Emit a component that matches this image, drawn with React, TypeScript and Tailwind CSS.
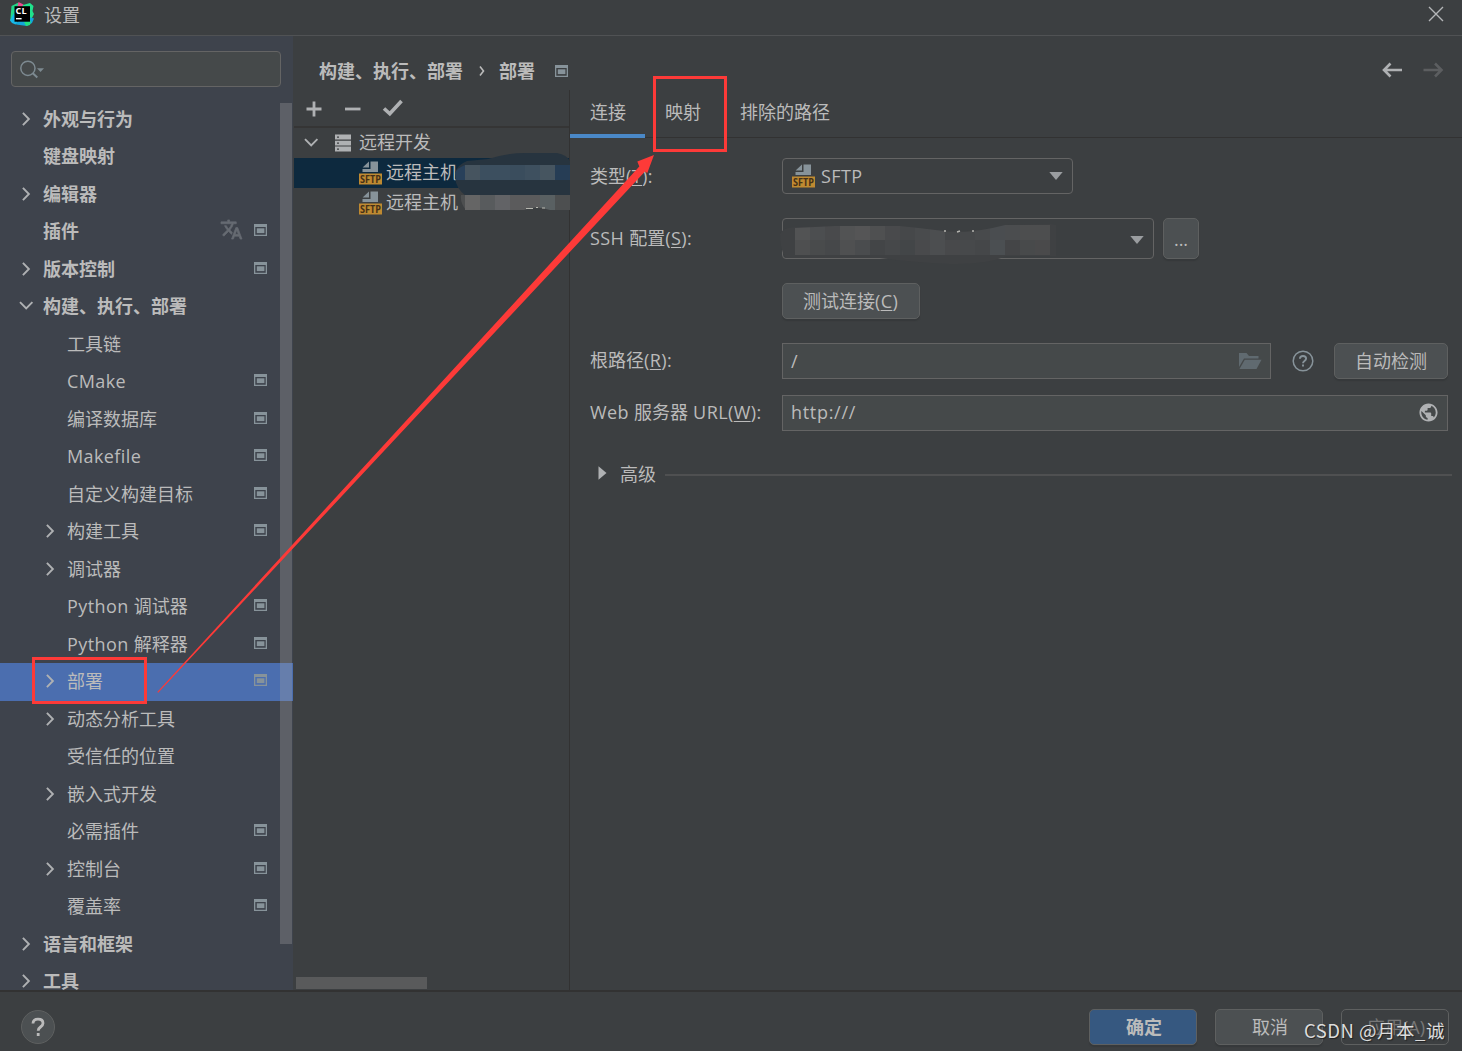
import React from 'react';
import clsx from 'clsx';

type TreeItem = {
  label: string;
  level?: number;
  arrow?: 'right' | 'down';
  badge?: boolean;
  translate?: boolean;
  selected?: boolean;
};

const TREE: TreeItem[] = [
  { label: '外观与行为', arrow: 'right' },
  { label: '键盘映射' },
  { label: '编辑器', arrow: 'right' },
  { label: '插件', badge: true, translate: true },
  { label: '版本控制', arrow: 'right', badge: true },
  { label: '构建、执行、部署', arrow: 'down' },
  { label: '工具链', level: 1 },
  { label: 'CMake', level: 1, badge: true },
  { label: '编译数据库', level: 1, badge: true },
  { label: 'Makefile', level: 1, badge: true },
  { label: '自定义构建目标', level: 1, badge: true },
  { label: '构建工具', level: 1, arrow: 'right', badge: true },
  { label: '调试器', level: 1, arrow: 'right' },
  { label: 'Python 调试器', level: 1, badge: true },
  { label: 'Python 解释器', level: 1, badge: true },
  { label: '部署', level: 1, arrow: 'right', badge: true, selected: true },
  { label: '动态分析工具', level: 1, arrow: 'right' },
  { label: '受信任的位置', level: 1 },
  { label: '嵌入式开发', level: 1, arrow: 'right' },
  { label: '必需插件', level: 1, badge: true },
  { label: '控制台', level: 1, arrow: 'right', badge: true },
  { label: '覆盖率', level: 1, badge: true },
  { label: '语言和框架', arrow: 'right' },
  { label: '工具', arrow: 'right' },
];

// latin runs sit a little wider than the CJK ones
function Mixed({ text }: { text: string }) {
  return (
    <>
      {text.split(/([\x20-\x7e]+)/).map((part, i) =>
        i % 2 ? (
          <span key={i} className="tracking-[0.4px]">
            {part}
          </span>
        ) : (
          part
        )
      )}
    </>
  );
}

function Chevron({ dir }: { dir: 'right' | 'down' }) {
  return (
    <svg width="16" height="16" viewBox="0 0 16 16" fill="none" stroke="#afb1b3" strokeWidth="1.9" className="shrink-0">
      <path d={dir === 'right' ? 'M4.9 1.8L10.9 8L4.9 14.2' : 'M2 4.2L8.2 10.4L14.4 4.2'} />
    </svg>
  );
}

function ProjectBadge({ className }: { className?: string }) {
  return (
    <svg width="14" height="12" viewBox="0 0 14 12" className={clsx('shrink-0', className)}>
      <path fillRule="evenodd" fill="#87939a" d="M0 0h13v12H0zM1.3 3v7.7h10.4V3z" />
      <rect x="2.8" y="4.3" width="7.6" height="4.8" fill="#87939a" />
    </svg>
  );
}

function SftpIcon() {
  return (
    <svg width="24" height="24" viewBox="0 0 24 24" className="shrink-0">
      <path d="M10 0.5V6.5H3.6z" fill="#87939a" />
      <path d="M11.5 0.5H19V11H3.5V8H11.5z" fill="#87939a" />
      <rect x="0" y="12.5" width="23" height="11" fill="#bf8a31" />
      <text
        x="11.5"
        y="21.9"
        textAnchor="middle"
        textLength="21"
        lengthAdjust="spacingAndGlyphs"
        fontSize="10.6"
        fontFamily="Open Sans"
        fontWeight="700"
        fill="#453017"
      >
        SFTP
      </text>
    </svg>
  );
}

function AppLogo() {
  return (
    <svg width="24" height="24" viewBox="0 0 24 24">
      <path d="M1.5 4L8 0.8L10 5L5 20L0.3 18z" fill="#21d789" />
      <path d="M8.5 0L13.5 2.5V6H7z" fill="#ee4a91" />
      <path d="M13 3L20 1L23.5 4L22.5 9L24 12L20 20L12 5z" fill="#1fe28c" />
      <path d="M0 18.5L4 11L8 21L5.5 22.5L2 21z" fill="#16b9e8" />
      <path d="M19 15L24 16.5L22 21L17 24L6 22.5L9 18z" fill="#12a5d9" />
      <path d="M14 20L21 19L20 23L16 24z" fill="#21e07f" />
      <rect x="4.5" y="4.2" width="15.5" height="15.5" fill="#000" />
      <text x="5.6" y="12.2" fontSize="8.6" fontWeight="700" fontFamily="Open Sans" fill="#fff" textLength="11" lengthAdjust="spacingAndGlyphs">
        CL
      </text>
      <rect x="6" y="16" width="5.6" height="1.4" fill="#fff" />
    </svg>
  );
}

function TreeRow({ item }: { item: TreeItem }) {
  return (
    <div
      className={clsx(
        'flex h-[37.5px] shrink-0 items-center pr-[25px]',
        item.level ? 'pl-[42px]' : 'pl-[18px] font-bold',
        item.selected && 'bg-[#4b6eaf]'
      )}
    >
      <span className="-mt-px w-[25px] shrink-0">{item.arrow && <Chevron dir={item.arrow} />}</span>
      <span className="flex-1 pb-px">
        <Mixed text={item.label} />
      </span>
      {item.translate && (
        <svg width="23" height="23" viewBox="0 0 24 24" fill="#666b72" stroke="#666b72" strokeWidth="0.7" className="mr-[11px] -mt-1">
          <path d="M12.87 15.07l-2.54-2.51.03-.03A17.52 17.52 0 0014.07 6H17V4h-7V2H8v2H1v2h11.17C11.5 7.92 10.44 9.75 9 11.35 8.07 10.32 7.3 9.19 6.69 8h-2c.73 1.63 1.73 3.17 2.98 4.56l-5.09 5.02L4 19l5-5 3.11 3.11.76-2.04zM18.500 10h-2L12 22h2l1.12-3h4.75L21 22h2l-4.500-12zm-2.620 7l1.620-4.330L19.120 17h-3.240z" />
        </svg>
      )}
      {item.badge && <ProjectBadge className="-mt-[3.5px]" />}
    </div>
  );
}

function Sidebar() {
  return (
    <aside className="relative flex w-[293px] shrink-0 flex-col overflow-hidden bg-[#3e434c]">
      <div className="mx-[11px] mt-[15px] mb-[13.5px] flex h-9 w-[270px] shrink-0 items-center rounded-[4px] border border-[#646464] bg-[#45494a] pl-2">
        <svg width="26" height="22" viewBox="0 0 26 22" fill="none" className="mt-0.5">
          <circle cx="7.9" cy="9.3" r="7.1" stroke="#7d8a91" strokeWidth="1.5" />
          <path d="M12.800 14.200L17.300 18.500" stroke="#7d8a91" strokeWidth="2" />
          <path d="M17 9.200H24L20.500 13z" fill="#7d8a91" />
        </svg>
      </div>
      {TREE.map((item) => (
        <TreeRow key={item.label} item={item} />
      ))}
      <div className="absolute top-[67px] right-px h-[841px] w-[12px] bg-[#a6a6a6]/30" />
    </aside>
  );
}

function Breadcrumb() {
  return (
    <div className="flex h-[54px] shrink-0 items-center pt-3.5 pr-[18px] pl-[25px] font-bold">
      <span className="pt-px">构建、执行、部署</span>
      <svg width="8" height="12" viewBox="0 0 8 12" fill="none" stroke="#bbb" strokeWidth="1.6" className="mt-px mr-[13px] ml-[15px]">
        <path d="M2 1.500L5.500 6L2 10.500" />
      </svg>
      <span className="pt-px">部署</span>
      <ProjectBadge className="mt-0.5 ml-5" />
      <svg width="21" height="16" viewBox="0 0 21 16" fill="none" stroke="#afb1b3" strokeWidth="2.600" className="ml-auto">
        <path d="M20 8H2M8.500 1.500L2 8L8.500 14.500" />
      </svg>
      <svg width="21" height="16" viewBox="0 0 21 16" fill="none" stroke="#5c5e60" strokeWidth="2.600" className="ml-5">
        <path d="M0.500 8H18.500M12 1.500L18.500 8L12 14.500" />
      </svg>
    </div>
  );
}

function ServerList() {
  return (
    <section className="relative flex w-[276px] shrink-0 flex-col border-r border-[#323232]">
      <div className="flex h-[38px] shrink-0 items-center gap-6 border-b-2 border-[#353535] pt-px pl-3">
        <svg width="16" height="16" viewBox="0 0 16 16" stroke="#afb1b3" strokeWidth="2.800">
          <path d="M8 0.500V15.500M0.500 8H15.500" />
        </svg>
        <svg width="16" height="16" viewBox="0 0 16 16" stroke="#afb1b3" strokeWidth="2.800" className="-ml-px">
          <path d="M0 8H15.500" />
        </svg>
        <svg width="22" height="18" viewBox="0 0 22 18" fill="none" stroke="#afb1b3" strokeWidth="3.600" className="-mt-px -ml-[3px]">
          <path d="M2 9.500L7.800 14.800L19.500 2" />
        </svg>
      </div>
      <div className="flex h-[30px] shrink-0 items-center pb-px pl-[9px]">
        <Chevron dir="down" />
        <svg width="16" height="18" viewBox="0 0 16 18" className="mr-2 ml-4">
          <path fill="#afb1b3" d="M0 0.500h16v5H0zM0 6.800h16v4.600H0zM0 12.600h16v5H0z" />
          <path fill="#3c3f41" d="M2 2.400h2v1.400H2zM2 8.400h2v1.400H2zM2 14.400h2v1.400H2z" />
        </svg>
        <span className="pb-px">远程开发</span>
      </div>
      <div className="flex h-[30px] shrink-0 items-center gap-[3px] bg-[#0d293e] pl-[65px]">
        <SftpIcon />
        <span className="pb-0.5">远程主机</span>
      </div>
      <div className="flex h-[30px] shrink-0 items-center gap-[3px] pl-[65px]">
        <SftpIcon />
        <span className="pb-0.5">远程主机</span>
      </div>
      {/* redaction strokes over the host addresses */}
      <svg width="115" height="64" viewBox="455 152 115 64" className="absolute top-[62px] left-[161px]">
        <path d="M455 173Q457 165 467 161L488 159Q510 152 530 153H557Q567 155 570 161V196H466Q454 187 455 173z" fill="#27343f" />
        <path d="M455 173Q457 168 465 165H570V180H456z" fill="#28405a" />
        <rect x="465" y="165" width="15" height="15" fill="#46545f" />
        <rect x="480" y="165" width="30" height="15" fill="#3c4f5f" />
        <rect x="510" y="165" width="15" height="15" fill="#3a4d5d" />
        <rect x="525" y="165" width="15" height="15" fill="#3e505f" />
        <rect x="540" y="165" width="15" height="15" fill="#465560" />
        <rect x="555" y="165" width="15" height="15" fill="#263d55" />
        <path d="M461 195H570V210H466Q460 203 461 195z" fill="#4d4f50" />
        <rect x="465" y="195" width="15" height="15" fill="#656565" />
        <rect x="480" y="195" width="15" height="15" fill="#585b5d" />
        <rect x="495" y="195" width="15" height="15" fill="#626366" />
        <rect x="510" y="195" width="30" height="15" fill="#5b5b5c" />
        <rect x="540" y="195" width="15" height="15" fill="#596062" />
        <path d="M524 210Q535 205 550 210z" fill="#3c3f41" />
        <path d="M526 208.500h7M536 207.500h2M542 208h3" stroke="#b8b8b0" strokeWidth="1.200" />
      </svg>
      <div className="absolute bottom-[1px] left-[2px] h-3 w-[131px] bg-[#595a5b]" />
    </section>
  );
}

function Mnemonic({ text, k, colon = true }: { text: string; k: string; colon?: boolean }) {
  return (
    <>
      <Mixed text={text} />
      <span className="tracking-[0.4px]">
        (<span className="underline decoration-1 underline-offset-2">{k}</span>){colon && ':'}
      </span>
    </>
  );
}

function Button({ className, children }: { className?: string; children: React.ReactNode }) {
  return (
    <button
      className={clsx(
        'flex shrink-0 items-center justify-center rounded-[5px] border border-[#5e6060] bg-[#4c5052] shadow-[0_2px_1px_#36393b]',
        className
      )}
    >
      {children}
    </button>
  );
}

function DownArrow({ className }: { className?: string }) {
  return (
    <svg width="14" height="8" viewBox="0 0 14 8" className={className}>
      <path d="M0.300 0H13.700L7 8z" fill="#9a9da0" />
    </svg>
  );
}

const MOSAIC = [
  ['#525354', '#4c4e50', '#494a4c', '#525354', '#555556', '#4f5051', '#494a4c', '#46484a', '#494b4d', '#4c4e50', '#444648', '#46484a', '#484a4c', '#4a4d50', '#4b4d4f', '#4d4e4f', '#4d4e4f'],
  ['#4e4f50', '#494b4c', '#46484a', '#4f5051', '#4a4c4e', '#434547', '#46484a', '#434648', '#494a4c', '#4c4e50', '#48494b', '#47494b', '#454749', '#4b4f52', '#444547', '#484a4b', '#4a4a4b'],
];

function ConnectionForm() {
  return (
    <div className="relative flex flex-col">
      <div className="mt-[20px] flex h-9 items-center pl-5">
        <span className="w-[192px]">
          <Mnemonic text="类型" k="T" />
        </span>
        <div className="flex h-9 w-[291px] items-center rounded-[4px] border border-[#646464] pr-[9px] pl-[9px]">
          <SftpIcon />
          <span className="ml-[5px] flex-1">
            <Mixed text="SFTP" />
          </span>
          <DownArrow />
        </div>
      </div>
      <div className="mt-6 flex h-[41px] items-center pl-5">
        <span className="w-[192px] pb-0.5">
          <Mnemonic text="SSH 配置" k="S" />
        </span>
        <div className="mr-[9px] flex h-[41px] w-[372px] items-center justify-end rounded-[4px] border border-[#646464] pr-[9px]">
          <DownArrow className="mt-0.5" />
        </div>
        <Button className="h-[41px] w-9">...</Button>
      </div>
      <Button className="mt-6 ml-[212px] h-9 w-[138px]">
        <span className="-ml-px">
          <Mnemonic text="测试连接" k="C" colon={false} />
        </span>
      </Button>
      <div className="mt-6 flex h-9 items-center pl-5">
        <span className="w-[192px] pb-0.5">
          <Mnemonic text="根路径" k="R" />
        </span>
        <div className="flex h-9 w-[489px] items-center border border-[#646464] bg-[#45494a] pr-2 pl-2">
          <span className="flex-1">/</span>
          <svg width="24" height="18" viewBox="0 0 24 18" fill="#606a70">
            <path d="M1 1H8.500L11 4H20.500V6.500H6L1 15z" />
            <path d="M6.800 7.800H23.500L18.500 17H1.500z" />
          </svg>
        </div>
        <svg width="22" height="22" viewBox="0 0 22 22" fill="none" stroke="#87939a" className="ml-[21px]">
          <circle cx="11" cy="11" r="9.800" strokeWidth="1.500" />
          <path d="M7.900 8.800Q8 6 11 6Q14.100 6 14.100 8.600Q14.100 9.900 12.500 11Q11 12 11 13.300" strokeWidth="1.900" />
          <path d="M11 14.600V16.600" strokeWidth="1.900" />
        </svg>
        <Button className="ml-5 h-9 w-[114px]">自动检测</Button>
      </div>
      <div className="mt-4 flex h-9 items-center pl-5">
        <span className="w-[192px] pb-[3px] whitespace-nowrap">
          <Mnemonic text="Web 服务器 URL" k="W" />
        </span>
        <div className="flex h-9 w-[666px] items-center border border-[#646464] bg-[#45494a] pr-[9px] pl-2">
          <span className="flex-1 pb-0.5 tracking-[0.7px]">http:///</span>
          <svg width="19" height="19" viewBox="1.500 1.500 21 21" fill="#afb1b3" className="-mt-0.5">
            <path d="M12 2C6.480 2 2 6.480 2 12s4.480 10 10 10 10-4.480 10-10S17.520 2 12 2zm-1 17.930c-3.950-.49-7-3.850-7-7.930 0-.62.080-1.210.21-1.790L9 15v1c0 1.100.9 2 2 2v1.930zm6.900-2.540c-.26-.81-1-1.390-1.900-1.390h-1v-3c0-.55-.45-1-1-1H8v-2h2c.55 0 1-.45 1-1V7h2c1.100 0 2-.9 2-2v-.41c2.930 1.190 5 4.060 5 7.410 0 2.080-.8 3.970-2.100 5.390z" />
          </svg>
        </div>
      </div>
      <div className="mt-[29px] flex h-[30px] items-center pl-7">
        <svg width="9" height="14" viewBox="0 0 9 14" className="mr-[13px] -mt-1">
          <path d="M0.500 0.300L8.500 7L0.500 13.700z" fill="#afb1b3" />
        </svg>
        <span className="pb-0.5">高级</span>
        <div className="mr-[10px] ml-[9px] h-0.5 flex-1 bg-[#4f5051]" />
      </div>
      {/* redacted ssh account */}
      <svg width="282" height="52" viewBox="780 217 282 52" className="absolute top-[79px] left-[210px]">
        <path d="M780 234Q782 228 795 227Q830 226 856 226H900Q930 230 955 231Q980 232 1006 225L1051 224L1056 225V256H1007Q985 265 950 264Q910 262 880 258H786Q780 250 780 234z" fill="#3f4143" />
        <clipPath id="account">
          <path d="M795 228L835 226H900Q930 229 950 232Q975 233 1005 225H1050V255H795z" />
        </clipPath>
        <g clipPath="url(#account)">
          {MOSAIC.map((row, r) =>
            row.map((fill, c) => <rect key={`${r}-${c}`} x={795 + c * 15} y={r ? 240 : 225} width="15" height="15" fill={fill} />)
          )}
        </g>
        <path d="M944 231h2M957 232l3-1M972 231h2" stroke="#b5b5b0" strokeWidth="1.500" />
      </svg>
    </div>
  );
}

function Annotations() {
  return (
    <>
      <div className="absolute top-[76px] left-[653px] h-[76px] w-[74px] border-[3px] border-[#fd3a38]" />
      <div className="absolute top-[657px] left-[32px] h-[47px] w-[115px] border-[3px] border-[#fd3a38]" />
      <svg width="1462" height="1051" className="pointer-events-none absolute top-0 left-0">
        <path d="M157.300 692L639.300 166.500L637.300 161.500L654 155L647.300 173L645 171.500L158.200 692.800z" fill="#fd3a38" />
      </svg>
      <div className="absolute top-[1017px] left-[1304px] flex h-[26px] w-[142px] items-center text-[18.500px] tracking-[0.5px] whitespace-nowrap text-[#dcdcdc] [text-shadow:1px_1px_1px_#222] [font-family:'Noto_Sans_CJK_SC',sans-serif]">
        CSDN @月本_诚
      </div>
    </>
  );
}

export default function App() {
  return (
    <div className="relative flex h-[1051px] w-[1462px] flex-col overflow-hidden bg-[#3c3f41] text-[18px] leading-6 text-[#bbbbbb] [font-family:'Open_Sans','Noto_Sans_CJK_SC',sans-serif]">
      <header className="flex h-9 shrink-0 items-center border-b border-[#505254] pr-[18px] pb-1 pl-[10px]">
        <div className="-mt-1">
          <AppLogo />
        </div>
        <span className="-mt-px ml-2.5">设置</span>
        <svg width="16" height="16" viewBox="0 0 16 16" stroke="#b4b6b8" strokeWidth="1.400" className="-mt-1 ml-auto">
          <path d="M1 1L15 15M15 1L1 15" />
        </svg>
      </header>
      <div className="flex h-[954px] shrink-0">
        <Sidebar />
        <main className="ml-px flex min-w-0 flex-1 flex-col">
          <Breadcrumb />
          <div className="flex min-h-0 flex-1">
            <ServerList />
            <section className="flex min-w-0 flex-1 flex-col">
              <nav className="flex h-12 shrink-0 border-b border-[#323232]">
                <span className="-mb-px flex w-[75px] items-center justify-center border-b-4 border-[#4a88c7] pl-px">连接</span>
                <span className="flex w-[75px] items-center justify-center pb-1 pl-px">映射</span>
                <span className="flex items-center pb-1 pl-5">排除的路径</span>
              </nav>
              <ConnectionForm />
            </section>
          </div>
        </main>
      </div>
      <footer className="flex flex-1 items-start gap-[18px] border-t-2 border-[#323232] pt-[17px] pr-[13px] pl-[21px]">
        <button className="mt-px mr-auto flex size-[34px] items-center justify-center rounded-full border border-[#5e6060] bg-[#4c5052]">
          <svg width="14" height="20" viewBox="0 0 14 20" fill="none" stroke="#bbbbbb" strokeWidth="2.800">
            <path d="M2 6.500Q2 2.200 7 2.200Q12 2.200 12 6.200Q12 8.200 9.500 10Q7.200 11.600 7.200 13.800" />
            <path d="M7.200 16V19" />
          </svg>
        </button>
        <Button className="h-9 w-[108px] border-[#4c708c] bg-[#365880] pl-0.5 font-bold">确定</Button>
        <Button className="h-9 w-[108px] pl-0.5">取消</Button>
        <button className="flex h-9 w-[108px] items-center justify-center rounded-[5px] border border-[#5e6060] pl-0.5 text-[#777777]">应用(A)</button>
      </footer>
      <Annotations />
    </div>
  );
}
